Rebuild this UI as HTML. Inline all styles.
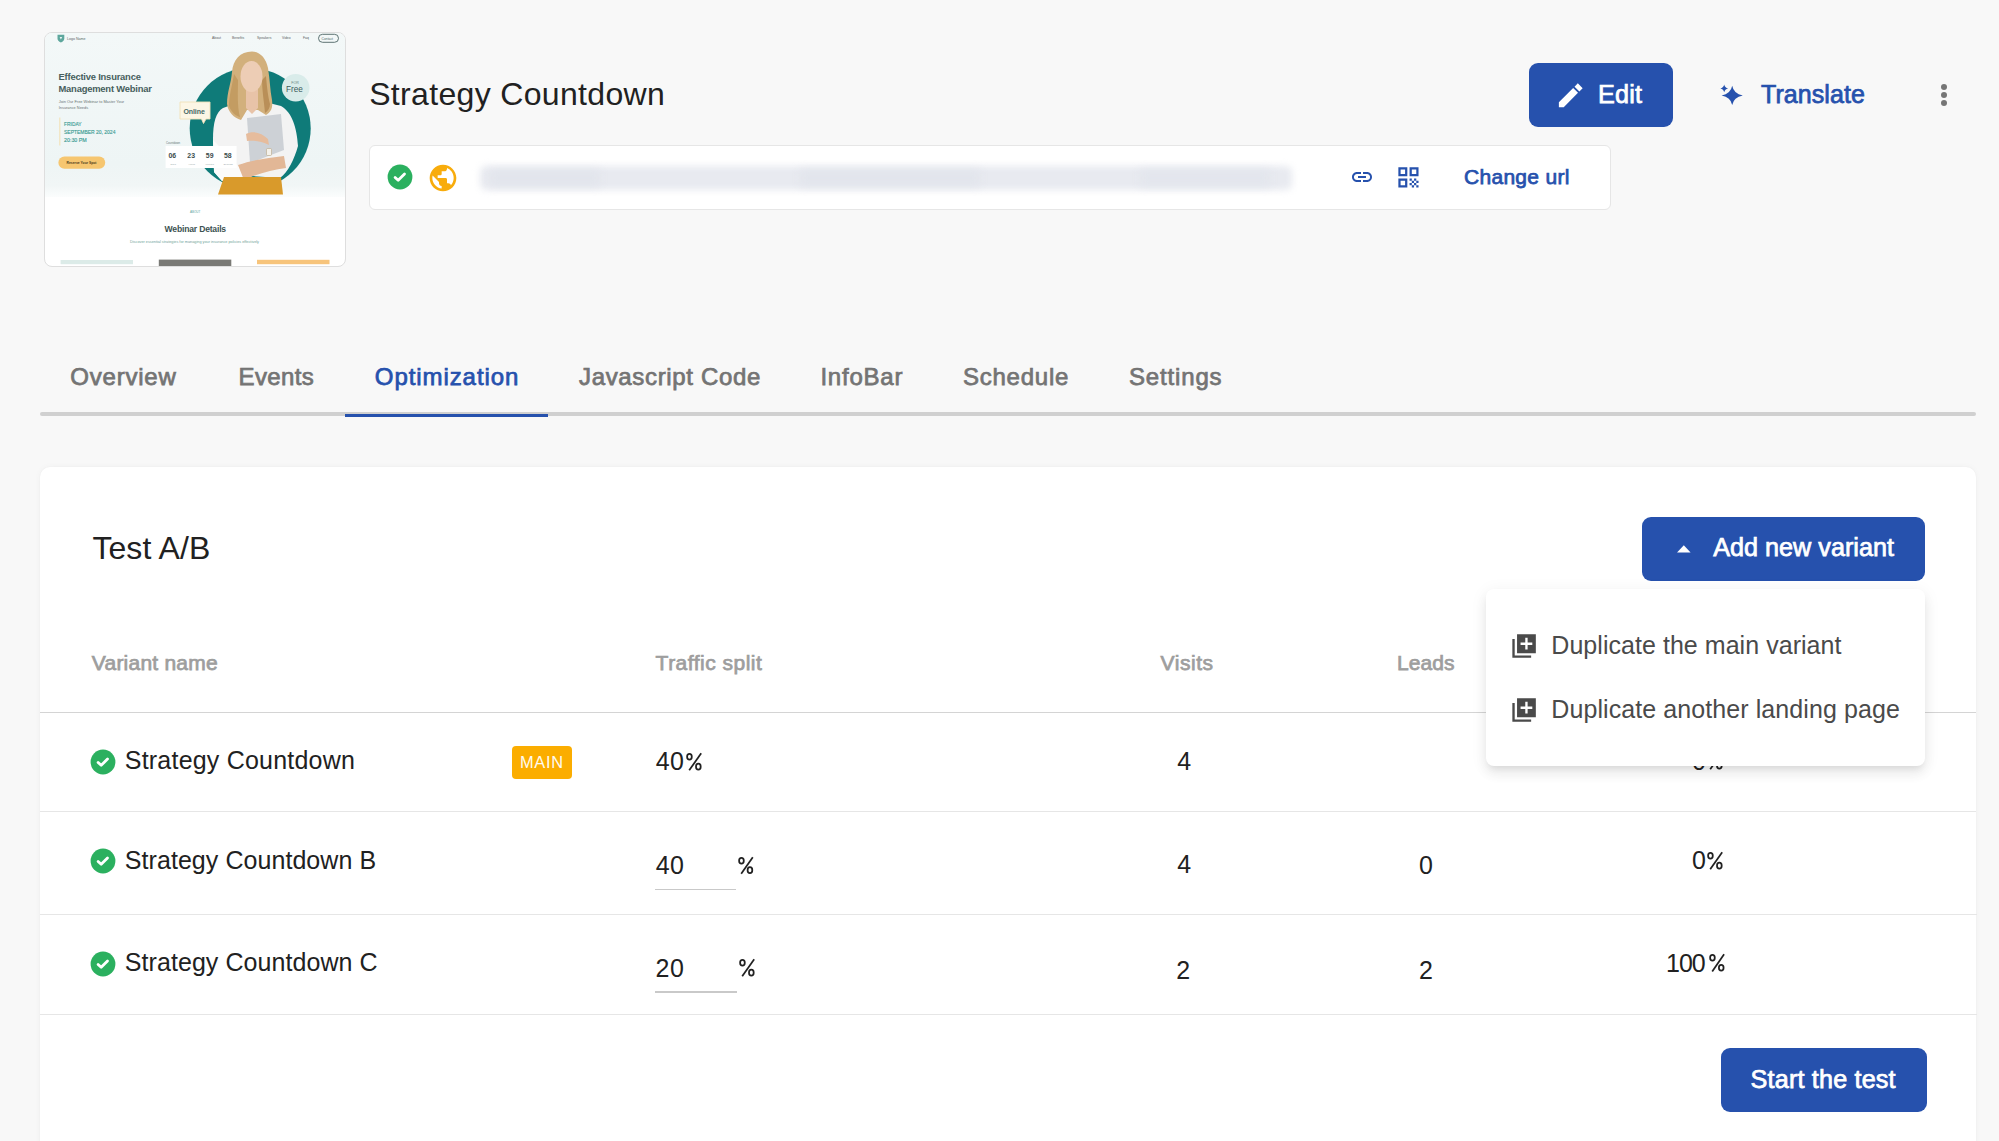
<!DOCTYPE html>
<html><head><meta charset="utf-8"><title>Strategy Countdown</title>
<style>
html,body{margin:0;padding:0;}
body{width:1999px;height:1141px;overflow:hidden;background:#f8f8f8;position:relative;font-family:"Liberation Sans",sans-serif;}
.a{position:absolute;}
.t{position:absolute;white-space:nowrap;font-family:"Liberation Sans",sans-serif;}
svg{position:absolute;overflow:visible;}
</style></head><body>

<div class="a" style="left:44px;top:32px;width:300px;height:233px;border:1px solid #dedede;border-radius:8px;overflow:hidden;background:#fff;">
<svg style="left:0;top:0" width="300" height="233" viewBox="45 33 300 233" font-family="Liberation Sans">
 <defs>
  <linearGradient id="hg" x1="0" y1="0" x2="0" y2="1"><stop offset="0" stop-color="#f3f8f8"/><stop offset="0.8" stop-color="#eef5f5"/><stop offset="0.93" stop-color="#f1f6f6"/><stop offset="1" stop-color="#fbfdfd"/></linearGradient>
 </defs>
 <rect x="45" y="33" width="300" height="164" fill="url(#hg)"/>
 <!-- nav -->
 <path d="M57.5 34.8 L64.3 34.8 L64.3 38.6 Q64.3 41 60.9 42.6 Q57.5 41 57.5 38.6 Z" fill="#5ea79d"/>
 <path d="M59.6 37 L62.2 37 L60.9 39.4 Z" fill="#e9f4f2"/>
 <text x="67" y="39.6" font-size="3.6" fill="#5c6666">Logo Name</text>
 <g font-size="3.4" fill="#5a6262">
  <text x="212" y="39.4">About</text><text x="232" y="39.4">Benefits</text><text x="257" y="39.4">Speakers</text><text x="282" y="39.4">Video</text><text x="303" y="39.4">Faq</text>
 </g>
 <rect x="318.5" y="34.3" width="20" height="8" rx="4" fill="none" stroke="#4d6565" stroke-width="0.9"/>
 <text x="321.6" y="39.6" font-size="3.3" fill="#4d6565">Contact</text>
 <!-- heading -->
 <g font-size="9.4" font-weight="bold" fill="#465e5c" letter-spacing="-0.2">
  <text x="58.5" y="79.6">Effective Insurance</text>
  <text x="58.5" y="91.7">Management Webinar</text>
 </g>
 <g font-size="3.9" fill="#6b7373">
  <text x="58.7" y="102.8">Join Our Free Webinar to Master Your</text>
  <text x="58.7" y="109.3">Insurance Needs</text>
 </g>
 <rect x="59.4" y="117.5" width="0.9" height="28" fill="#f3dca8"/>
 <g font-size="4.6" fill="#3a9b93" stroke="#3a9b93" stroke-width="0.12">
  <text x="64" y="126.2" textLength="17.6" lengthAdjust="spacingAndGlyphs">FRIDAY</text>
  <text x="64" y="133.9" textLength="51.4" lengthAdjust="spacingAndGlyphs">SEPTEMBER 20, 2024</text>
  <text x="64" y="141.6" textLength="22.8" lengthAdjust="spacingAndGlyphs">20:30 PM</text>
 </g>
 <rect x="58.4" y="156.6" width="46.8" height="12.1" rx="6" fill="#f6c670"/>
 <text x="66.5" y="163.9" font-size="3.5" font-weight="bold" fill="#4a3a1c" textLength="30" lengthAdjust="spacingAndGlyphs">Reserve Your Spot</text>
 <!-- teal circle -->
 <circle cx="250.2" cy="128.5" r="60.5" fill="#0f7b79"/>
 <!-- woman -->
 <path d="M223 108 C216 112 213 122 213 140 L214 172 L222 181 L246 181 L252 176 L280 178 C288 172 294 160 298 146 C297 128 292 112 281 106 L265 102 L252 112 L240 102 Z" fill="#f3f3f3"/>
 <path d="M213 140 L214 172 L222 181 L244 181 L240 168 Z" fill="#fbfbfb"/>
 <path d="M252 51.5 C240 51.5 233 60 232 72 C231 84 227 92 227 104 C228 112 234 118 241 120 L247 110 L258 110 L266 115 C271 112 273 108 272 100 C270 90 270 80 268 68 C266 58 260 51.5 252 51.5 Z" fill="#d2b07c"/>
 <path d="M234 74 C232 86 229 96 229 106 C231 112 236 116 240 117 C237 106 238 92 238 80 Z" fill="#c39c62"/>
 <path d="M266 76 C267 88 268 96 270 104 C270 108 268 111 265 113 C264 102 262 90 262 80 Z" fill="#b98f58"/>
 <path d="M246 88 L258 88 L258 108 L252 114 L246 108 Z" fill="#e8c3a8"/>
 <ellipse cx="251.5" cy="76.5" rx="11" ry="15.5" fill="#edcdb5"/>
 <path d="M247 118 L281 114 L284 150 L250 163 Z" fill="#cdd1d6"/>
 <path d="M246 134 C253 130 262 133 268 139 L269 145 C261 141 253 140 247 141 Z" fill="#e6bc9d"/>
 <path d="M238 165 C252 160 268 158 284 156 L286 168 C272 170 256 174 244 180 Z" fill="#e2b796"/>
 <rect x="266.5" y="148.5" width="5" height="7" rx="1" fill="#f4f1ea" stroke="#b8a888" stroke-width="0.6"/>
 <path d="M224 177 L281 177 L283 194.5 L218 194.5 Z" fill="#d99a2b"/>
 <!-- for free -->
 <circle cx="295.7" cy="87.8" r="13.8" fill="#d9ecea"/>
 <text x="291.2" y="84.4" font-size="3.6" fill="#6a8484">FOR</text>
 <text x="286" y="92.3" font-size="8.2" fill="#3d5b5b">Free</text>
 <!-- online -->
 <path d="M180 102 L210 102 L210 119 L206 119 L203.5 123.5 L201.5 119 L180 119 Z" fill="#fcf6e5" stroke="#f1e1b8" stroke-width="0.9"/>
 <text x="183.5" y="113.6" font-size="7" font-weight="bold" fill="#466866" letter-spacing="-0.1">Online</text>
 <!-- countdown -->
 <text x="166" y="143.6" font-size="2.8" fill="#6a7a7a">Countdown</text>
 <rect x="165.6" y="146" width="71" height="22" fill="#ffffff"/>
 <g font-size="6.9" font-weight="bold" fill="#3b4d4d">
  <text x="168.4" y="157.9">06</text><text x="187.3" y="157.9">23</text><text x="205.8" y="157.9">59</text><text x="224" y="157.9">58</text>
 </g>
 <g font-size="2.4" fill="#9aa6a6"><text x="170.5" y="164.5">Days</text><text x="188.5" y="164.5">Hours</text><text x="205.5" y="164.5">Minutes</text><text x="223.5" y="164.5">Seconds</text></g>
 <!-- below hero -->
 <text x="190" y="212.6" font-size="3" fill="#5aa49c">ABOUT</text>
 <text x="164.6" y="232.4" font-size="8.6" font-weight="bold" fill="#3c5252" letter-spacing="-0.2">Webinar Details</text>
 <text x="130" y="243.2" font-size="3.55" fill="#6f9f9a" textLength="129" lengthAdjust="spacingAndGlyphs">Discover essential strategies for managing your insurance policies effectively</text>
 <rect x="60.6" y="260" width="72.4" height="4.2" fill="#dcebe8"/>
 <rect x="158.8" y="259.6" width="72.5" height="7" fill="#7a7a76"/>
 <rect x="257" y="259.8" width="72.5" height="4.4" fill="#f7c47b"/>
</svg>
</div>

<div class="t" style="left:369.2px;top:78.02px;font-size:32px;line-height:32px;letter-spacing:0.332px;font-weight:normal;color:#212121;">Strategy Countdown</div>
<div class="a" style="left:369px;top:145px;width:1240px;height:63px;background:#fff;border:1px solid #e6e6e6;border-radius:6px;"></div>
<svg style="left:384.7px;top:162.3px" width="30" height="30" viewBox="-15 -15 30 30"><circle cx="0" cy="0" r="12.4" fill="#2bb05f"/><path d="M-4.9 0.4 L-1.8 3.3 L4.5 -2.9" fill="none" stroke="#fff" stroke-width="2.8" stroke-linecap="round" stroke-linejoin="round"/></svg>
<svg style="left:426.5px;top:162px" width="32" height="32" viewBox="0 0 24 24"><path fill="#f8ac0c" d="M12 2C6.48 2 2 6.48 2 12s4.48 10 10 10 10-4.48 10-10S17.520 2 12 2zm-1 17.93c-3.95-.49-7-3.85-7-7.930 0-.62.08-1.21.21-1.79L9 15v1c0 1.1.9 2 2 2v1.93zm6.9-2.54c-.26-.81-1-1.39-1.9-1.39h-1v-3c0-.55-.45-1-1-1H8v-2h2c.55 0 1-.45 1-1V7h2c1.1 0 2-.9 2-2v-.41c2.93 1.19 5 4.06 5 7.41 0 2.08-.8 3.97-2.1 5.39z"/></svg>
<div class="a" style="left:480px;top:166px;width:812px;height:24px;background:#e8eaf0;border-radius:6px;filter:blur(3.5px);"></div>
<div class="a" style="left:490px;top:170px;width:110px;height:16px;background:#e2e5ec;filter:blur(4px);"></div>
<div class="a" style="left:800px;top:170px;width:180px;height:16px;background:#e2e5ec;filter:blur(4px);"></div>
<div class="a" style="left:1140px;top:170px;width:130px;height:16px;background:#e3e6ed;filter:blur(4px);"></div>
<svg style="left:1349.6px;top:164.8px" width="24" height="24" viewBox="0 0 24 24"><path fill="#2651ad" d="M3.9 12c0-1.71 1.39-3.1 3.1-3.1h4V7H7c-2.76 0-5 2.240-5 5s2.24 5 5 5h4v-1.9H7c-1.71 0-3.1-1.39-3.1-3.1zM8 13h8v-2H8v2zm9-6h-4v1.9h4c1.71 0 3.1 1.39 3.1 3.1s-1.39 3.1-3.1 3.1h-4V17h4c2.76 0 5-2.24 5-5s-2.24-5-5-5z"/></svg>
<svg style="left:1395.2px;top:163.6px" width="26.9" height="26.9" viewBox="0 0 24 24"><path fill="#2651ad" d="M3 11h8V3H3v8zm2-6h4v4H5V5zM3 21h8v-8H3v8zm2-6h4v4H5v-4zM13 3v8h8V3h-8zm6 6h-4V5h4v4zM19 19h2v2h-2zM13 13h2v2h-2zM15 15h2v2h-2zM13 17h2v2h-2zM15 19h2v2h-2zM17 17h2v2h-2zM17 13h2v2h-2zM19 15h2v2h-2z"/></svg>
<div class="t" style="left:1464px;top:166.33px;font-size:21px;line-height:21px;letter-spacing:0.292px;font-weight:normal;color:#2651ad;-webkit-text-stroke:0.75px #2651ad;">Change url</div>
<div class="a" style="left:1529px;top:63px;width:143.5px;height:64px;background:#2651ad;border-radius:9px;"></div>
<svg style="left:1554.7px;top:80px" width="31" height="31" viewBox="0 0 24 24"><path fill="#fff" d="M3 17.25V21h3.75L17.81 9.94l-3.75-3.75L3 17.25zM21.41 6.34l-3.75-3.75-2.53 2.54 3.75 3.75 2.53-2.54z"/></svg>
<div class="t" style="left:1598px;top:82.17px;font-size:25.2px;line-height:25.2px;letter-spacing:0.199px;font-weight:normal;color:#fff;-webkit-text-stroke:0.75px #fff;">Edit</div>
<svg style="left:1710px;top:80px" width="40" height="30" viewBox="1710 80 40 30"><path fill="#2651ad" d="M1732.2 85.80000000000001 Q1733.7 93.9 1742.8 95.4 Q1733.7 96.9 1732.2 105.0 Q1730.7 96.9 1721.6000000000001 95.4 Q1730.7 93.9 1732.2 85.80000000000001 Z M1724.2 84.5 Q1724.8 87.80000000000001 1728.1000000000001 88.4 Q1724.8 89.0 1724.2 92.30000000000001 Q1723.6000000000001 89.0 1720.3 88.4 Q1723.6000000000001 87.80000000000001 1724.2 84.5 Z"/></svg>
<div class="t" style="left:1761px;top:82.34px;font-size:25px;line-height:25px;letter-spacing:0.078px;font-weight:normal;color:#2651ad;-webkit-text-stroke:0.75px #2651ad;">Translate</div>
<div class="a" style="left:1940.5px;top:84.1px;width:6px;height:6px;border-radius:50%;background:#767676"></div>
<div class="a" style="left:1940.5px;top:92.2px;width:6px;height:6px;border-radius:50%;background:#767676"></div>
<div class="a" style="left:1940.5px;top:100.2px;width:6px;height:6px;border-radius:50%;background:#767676"></div>
<div class="a" style="left:40px;top:412px;width:1935.5px;height:3.5px;background:#d0d0d0;border-radius:2px;"></div>
<div class="a" style="left:345px;top:414px;width:203px;height:3.2px;background:#2651ad;"></div>
<div class="t" style="left:70.3px;top:365.39px;font-size:24px;line-height:24px;letter-spacing:0.773px;font-weight:normal;color:#747474;-webkit-text-stroke:0.75px #747474;">Overview</div>
<div class="t" style="left:238.5px;top:365.39px;font-size:24px;line-height:24px;letter-spacing:0.386px;font-weight:normal;color:#747474;-webkit-text-stroke:0.75px #747474;">Events</div>
<div class="t" style="left:374.8px;top:365.39px;font-size:24px;line-height:24px;letter-spacing:0.924px;font-weight:normal;color:#2651ad;-webkit-text-stroke:0.75px #2651ad;">Optimization</div>
<div class="t" style="left:579px;top:365.39px;font-size:24px;line-height:24px;letter-spacing:0.662px;font-weight:normal;color:#747474;-webkit-text-stroke:0.75px #747474;">Javascript Code</div>
<div class="t" style="left:820.4px;top:365.39px;font-size:24px;line-height:24px;letter-spacing:0.769px;font-weight:normal;color:#747474;-webkit-text-stroke:0.75px #747474;">InfoBar</div>
<div class="t" style="left:963px;top:365.39px;font-size:24px;line-height:24px;letter-spacing:0.753px;font-weight:normal;color:#747474;-webkit-text-stroke:0.75px #747474;">Schedule</div>
<div class="t" style="left:1129px;top:365.39px;font-size:24px;line-height:24px;letter-spacing:0.84px;font-weight:normal;color:#747474;-webkit-text-stroke:0.75px #747474;">Settings</div>
<div class="a" style="left:40px;top:466.5px;width:1936px;height:720px;background:#fff;border-radius:10px;box-shadow:0 0 2px rgba(0,0,0,0.035),0 0 7px rgba(0,0,0,0.035);"></div>
<div class="t" style="left:92.4px;top:531.92px;font-size:32px;line-height:32px;letter-spacing:0.084px;font-weight:normal;color:#212121;">Test A/B</div>
<div class="a" style="left:1641.5px;top:516.5px;width:283.5px;height:64px;background:#2651ad;border-radius:9px;"></div>
<svg style="left:1670px;top:540px" width="30" height="20" viewBox="1670 540 30 20"><path fill="#fff" d="M1677 552.6 L1683.8 545.3 L1690.6 552.6 Z"/></svg>
<div class="t" style="left:1713.2px;top:535.17px;font-size:25.2px;line-height:25.2px;letter-spacing:0.013px;font-weight:normal;color:#fff;-webkit-text-stroke:0.75px #fff;">Add new variant</div>
<div class="t" style="left:91.8px;top:651.63px;font-size:21px;line-height:21px;letter-spacing:0.23px;font-weight:normal;color:#9e9e9e;-webkit-text-stroke:0.75px #9e9e9e;">Variant name</div>
<div class="t" style="left:655.6px;top:651.53px;font-size:21px;line-height:21px;letter-spacing:0.49px;font-weight:normal;color:#9e9e9e;-webkit-text-stroke:0.75px #9e9e9e;">Traffic split</div>
<div class="t" style="left:1160.5px;top:651.63px;font-size:21px;line-height:21px;letter-spacing:0.561px;font-weight:normal;color:#9e9e9e;-webkit-text-stroke:0.75px #9e9e9e;">Visits</div>
<div class="t" style="left:1397px;top:651.63px;font-size:21px;line-height:21px;letter-spacing:0.046px;font-weight:normal;color:#9e9e9e;-webkit-text-stroke:0.75px #9e9e9e;">Leads</div>
<div class="a" style="left:40px;top:712px;width:1936px;height:1.2px;background:#d4d4d4;"></div>
<svg style="left:88.3px;top:747.2px" width="30" height="30" viewBox="-15 -15 30 30"><circle cx="0" cy="0" r="12.4" fill="#2bb05f"/><path d="M-4.9 0.4 L-1.8 3.3 L4.5 -2.9" fill="none" stroke="#fff" stroke-width="2.8" stroke-linecap="round" stroke-linejoin="round"/></svg>
<div class="t" style="left:124.8px;top:748.34px;font-size:25px;line-height:25px;letter-spacing:0.21px;font-weight:normal;color:#212121;">Strategy Countdown</div>
<div class="a" style="left:512px;top:745.5px;width:60px;height:33.5px;background:#fbad00;border-radius:4px;"></div>
<div class="t" style="left:519.9px;top:753.90px;font-size:16.42px;line-height:16.42px;letter-spacing:0.711px;font-weight:normal;color:#fffaf0;">MAIN</div>
<div class="t" style="left:655.8px;top:749.34px;font-size:25px;line-height:25px;letter-spacing:0.296px;font-weight:normal;color:#212121;">40</div>
<svg style="left:683.9px;top:751.3px;" width="19.8" height="21.5" viewBox="683.9 751.3 19.8 21.5"><g fill="none" stroke="#212121" stroke-width="1.75"><ellipse cx="689.35" cy="757.05" rx="2.35" ry="2.9"/><ellipse cx="698.25" cy="766.95" rx="2.35" ry="2.9"/><path d="M701.10 753.60 L689.10 770.60"/></g></svg>
<div class="t" style="left:1177.2px;top:749.14px;font-size:25px;line-height:25px;letter-spacing:0px;font-weight:normal;color:#212121;">4</div>
<div class="t" style="left:1691.9px;top:748.94px;font-size:25px;line-height:25px;letter-spacing:0px;font-weight:normal;color:#212121;">0</div>
<svg style="left:1704.9px;top:750.3px;" width="19.8" height="21.5" viewBox="1704.9 750.3 19.8 21.5"><g fill="none" stroke="#212121" stroke-width="1.75"><ellipse cx="1710.35" cy="756.05" rx="2.35" ry="2.9"/><ellipse cx="1719.25" cy="765.95" rx="2.35" ry="2.9"/><path d="M1722.10 752.60 L1710.10 769.60"/></g></svg>
<div class="a" style="left:40px;top:811.3px;width:1936px;height:1.2px;background:#e6e6e6;"></div>
<svg style="left:88.3px;top:846.3px" width="30" height="30" viewBox="-15 -15 30 30"><circle cx="0" cy="0" r="12.4" fill="#2bb05f"/><path d="M-4.9 0.4 L-1.8 3.3 L4.5 -2.9" fill="none" stroke="#fff" stroke-width="2.8" stroke-linecap="round" stroke-linejoin="round"/></svg>
<div class="t" style="left:124.8px;top:847.74px;font-size:25px;line-height:25px;letter-spacing:0.059px;font-weight:normal;color:#212121;">Strategy Countdown B</div>
<div class="t" style="left:655.8px;top:852.64px;font-size:25px;line-height:25px;letter-spacing:0.296px;font-weight:normal;color:#212121;">40</div>
<svg style="left:736.4px;top:855px;" width="19.4" height="21" viewBox="736.4 855 19.4 21"><g fill="none" stroke="#212121" stroke-width="1.75"><ellipse cx="741.85" cy="860.75" rx="2.35" ry="2.9"/><ellipse cx="750.35" cy="870.15" rx="2.35" ry="2.9"/><path d="M753.20 857.30 L741.60 873.80"/></g></svg>
<div class="t" style="left:1177.2px;top:852.24px;font-size:25px;line-height:25px;letter-spacing:0px;font-weight:normal;color:#212121;">4</div>
<div class="t" style="left:1419px;top:853.34px;font-size:25px;line-height:25px;letter-spacing:0px;font-weight:normal;color:#212121;">0</div>
<div class="t" style="left:1691.9px;top:847.74px;font-size:25px;line-height:25px;letter-spacing:0px;font-weight:normal;color:#212121;">0</div>
<svg style="left:1704.9px;top:849.7px;" width="19.8" height="21.5" viewBox="1704.9 849.7 19.8 21.5"><g fill="none" stroke="#212121" stroke-width="1.75"><ellipse cx="1710.35" cy="855.45" rx="2.35" ry="2.9"/><ellipse cx="1719.25" cy="865.35" rx="2.35" ry="2.9"/><path d="M1722.10 852.00 L1710.10 869.00"/></g></svg>
<div class="a" style="left:654.7px;top:888.7px;width:81.3px;height:1.5px;background:#c9c9c9;"></div>
<div class="a" style="left:40px;top:914px;width:1937px;height:1.2px;background:#e6e6e6;"></div>
<svg style="left:88.3px;top:949px" width="30" height="30" viewBox="-15 -15 30 30"><circle cx="0" cy="0" r="12.4" fill="#2bb05f"/><path d="M-4.9 0.4 L-1.8 3.3 L4.5 -2.9" fill="none" stroke="#fff" stroke-width="2.8" stroke-linecap="round" stroke-linejoin="round"/></svg>
<div class="t" style="left:124.8px;top:950.44px;font-size:25px;line-height:25px;letter-spacing:0.065px;font-weight:normal;color:#212121;">Strategy Countdown C</div>
<div class="t" style="left:655.5px;top:955.64px;font-size:25px;line-height:25px;letter-spacing:0.496px;font-weight:normal;color:#212121;">20</div>
<svg style="left:736.7px;top:957.3px;" width="19.8" height="21.5" viewBox="736.7 957.3 19.8 21.5"><g fill="none" stroke="#212121" stroke-width="1.75"><ellipse cx="742.15" cy="963.05" rx="2.35" ry="2.9"/><ellipse cx="751.05" cy="972.95" rx="2.35" ry="2.9"/><path d="M753.90 959.60 L741.90 976.60"/></g></svg>
<div class="t" style="left:1176.2px;top:957.64px;font-size:25px;line-height:25px;letter-spacing:0px;font-weight:normal;color:#212121;">2</div>
<div class="t" style="left:1419px;top:957.64px;font-size:25px;line-height:25px;letter-spacing:0px;font-weight:normal;color:#212121;">2</div>
<div class="t" style="left:1666px;top:950.94px;font-size:25px;line-height:25px;letter-spacing:-1.004px;font-weight:normal;color:#212121;">100</div>
<svg style="left:1706.7px;top:952.3px;" width="19.7" height="21.7" viewBox="1706.7 952.3 19.7 21.7"><g fill="none" stroke="#212121" stroke-width="1.75"><ellipse cx="1712.15" cy="958.05" rx="2.35" ry="2.9"/><ellipse cx="1720.95" cy="968.15" rx="2.35" ry="2.9"/><path d="M1723.80 954.60 L1711.90 971.80"/></g></svg>
<div class="a" style="left:654.7px;top:991.1px;width:82.3px;height:1.5px;background:#c9c9c9;"></div>
<div class="a" style="left:40px;top:1013.5px;width:1937px;height:1.2px;background:#e6e6e6;"></div>
<div class="a" style="left:1720.6px;top:1048.2px;width:206px;height:63.8px;background:#2651ad;border-radius:9px;"></div>
<div class="t" style="left:1750.6px;top:1066.77px;font-size:25.2px;line-height:25.2px;letter-spacing:0.169px;font-weight:normal;color:#fff;-webkit-text-stroke:0.75px #fff;">Start the test</div>
<div class="a" style="left:1486.3px;top:588.7px;width:439px;height:177.8px;background:#fff;border-radius:8px;box-shadow:0 5px 6px -3px rgba(0,0,0,0.08),0 8px 12px 1px rgba(0,0,0,0.05),0 3px 16px 2px rgba(0,0,0,0.05);z-index:5"></div>
<svg style="left:1510.2px;top:631.95px;z-index:6" width="28.2" height="28.2" viewBox="0 0 24 24"><path fill="#4a4a4a" fill-rule="evenodd" d="M4 6H2v16h16v-2H4V6zM22 2H6v16h16V2zM19 11h-4v4h-2v-4H9V9h4V5h2v4h4v2z"/></svg>
<div class="t" style="left:1551.3px;top:633.44px;font-size:25px;line-height:25px;letter-spacing:0.044px;font-weight:normal;color:#4a4a4a;z-index:6;">Duplicate the main variant</div>
<svg style="left:1510.2px;top:696.15px;z-index:6" width="28.2" height="28.2" viewBox="0 0 24 24"><path fill="#4a4a4a" fill-rule="evenodd" d="M4 6H2v16h16v-2H4V6zM22 2H6v16h16V2zM19 11h-4v4h-2v-4H9V9h4V5h2v4h4v2z"/></svg>
<div class="t" style="left:1551.3px;top:696.94px;font-size:25px;line-height:25px;letter-spacing:0.083px;font-weight:normal;color:#4a4a4a;z-index:6;">Duplicate another landing page</div>
</body></html>
